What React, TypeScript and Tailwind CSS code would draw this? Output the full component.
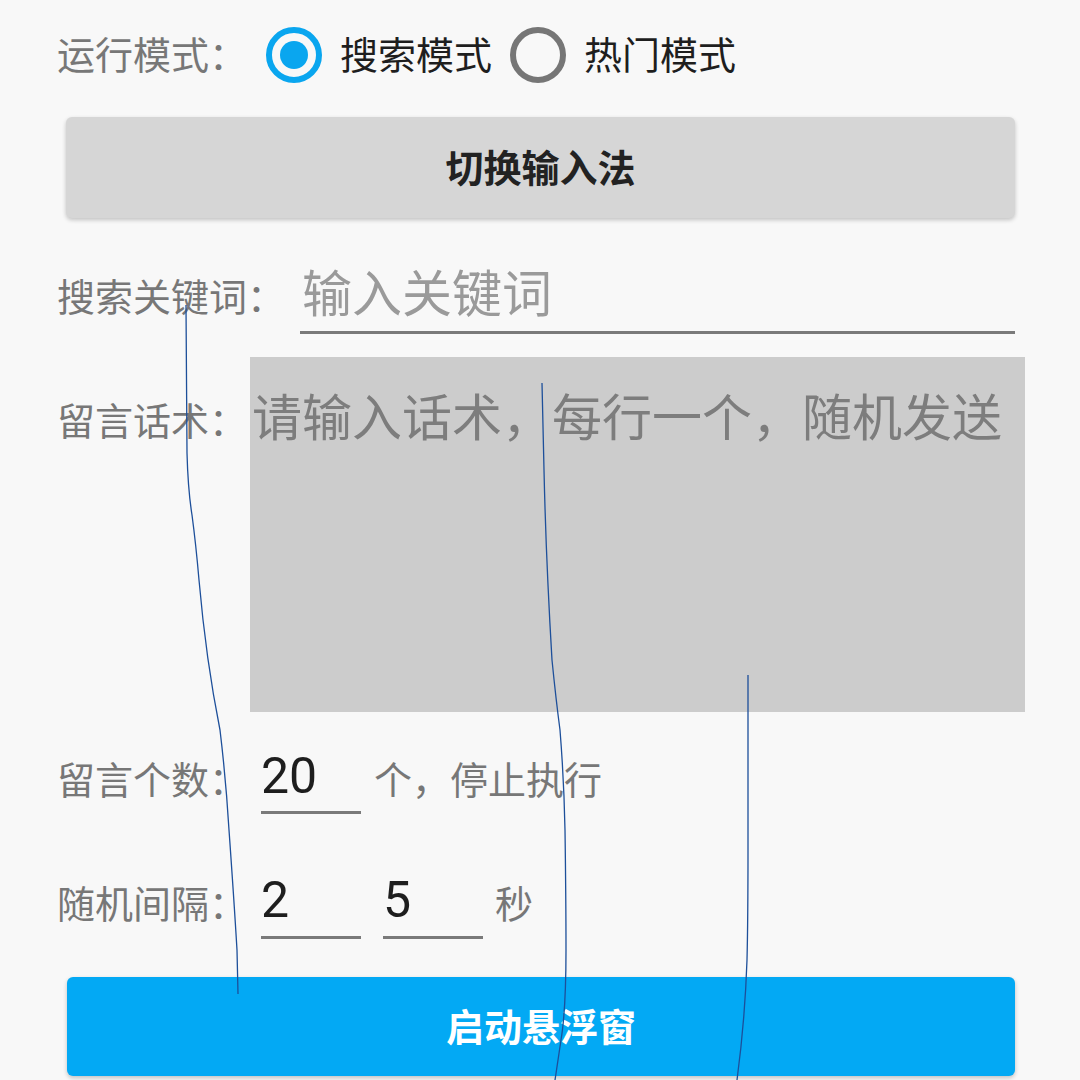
import React from "react";

const cjk = { fontFamily: '"Noto Sans CJK SC", "Noto Sans", sans-serif' };
const num = { fontFamily: 'Roboto, "Noto Sans CJK SC", sans-serif' };

const Radio = ({ checked }: { checked: boolean }) => (
    <div
        className={
            checked
                ? "w-[56px] h-[56px] rounded-full border-[6px] border-[#0aa6ef] flex items-center justify-center shrink-0"
                : "w-[56px] h-[56px] rounded-full border-[6px] border-[#767676] shrink-0"
        }
    >
        {checked && <div className="w-[28px] h-[28px] rounded-full bg-[#0aa6ef]" />}
    </div>
);

const LineInput = ({ value, className }: { value: string; className?: string }) => (
    <input
        readOnly
        value={value}
        style={num}
        className={`w-[100px] bg-transparent border-b-[3px] border-[#7a7a7a] text-[50px] text-[#1e1e1e] outline-none px-0 ${className ?? ""}`}
    />
);

// thin blue strokes drawn over the screenshot
const Scribbles = () => (
    <svg className="absolute inset-0 pointer-events-none" width="1080" height="1080" viewBox="0 0 1080 1080" fill="none">
        <path d="M186 305 L187 453 Q188 490 192 515 Q196 545 199 580 Q206 660 220 730 Q226 780 229 830 Q234 900 237 950 L238 994" stroke="#1d4f9a" strokeWidth="1.3" />
        <path d="M542 383 L544 470 Q546 560 552 660 Q556 700 560 730 Q564 780 565 830 Q566 900 566 950 Q566 1010 561 1040 L555 1080" stroke="#1d4f9a" strokeWidth="1.3" />
        <path d="M748 675 L748 850 Q748 920 747 960 Q745 1020 737 1080" stroke="#1d4f9a" strokeWidth="1.3" />
    </svg>
);

const App = () => {
    return (
        <div className="relative w-[1080px] h-[1080px] overflow-hidden bg-[#f8f8f8]" style={cjk}>
            <div className="pl-[57px] pr-[65px]">
                {/* 运行模式 */}
                <div className="mt-[20px] h-[70px] flex items-center">
                    <span className="w-[209px] text-[38px] text-[#777777] leading-none pb-[4px]">运行模式：</span>
                    <Radio checked />
                    <span className="ml-[18px] text-[38px] text-[#1e1e1e] leading-none pb-[4px]">搜索模式</span>
                    <div className="ml-[18px]"><Radio checked={false} /></div>
                    <span className="ml-[18px] text-[38px] text-[#1e1e1e] leading-none pb-[4px]">热门模式</span>
                </div>

                <button className="mt-[27px] ml-[9px] w-[949px] h-[101px] bg-[#d6d6d6] rounded-[6px] shadow-[0_2px_4px_rgba(0,0,0,0.22)] text-[38px] font-bold text-[#222222] flex items-center justify-center pb-[4px]">
                    切换输入法
                </button>

                {/* 搜索关键词 */}
                <div className="mt-[38px] flex items-center h-[78px]">
                    <span className="w-[243px] text-[38px] text-[#777777] leading-none shrink-0">搜索关键词：</span>
                    <input
                        readOnly
                        placeholder="输入关键词"
                        className="w-[715px] h-[78px] bg-transparent border-b-[3px] border-[#7a7a7a] text-[50px] outline-none px-[2px] pb-[8px] placeholder:text-[#9a9a9a]"
                    />
                </div>

                {/* 留言话术 */}
                <div className="mt-[23px] flex items-start">
                    <span className="w-[193px] shrink-0 pt-[39px] text-[38px] text-[#777777] leading-[1.2]">留言话术：</span>
                    <textarea
                        readOnly
                        placeholder="请输入话术，每行一个，随机发送"
                        className="w-[775px] h-[355px] shrink-0 bg-[#cccccc] resize-none outline-none pt-[27px] pl-[2px] text-[50px] leading-[1.2] placeholder:text-[#7d7d7d] overflow-hidden"
                    />
                </div>

                {/* 留言个数 */}
                <div className="mt-[29px] flex items-center h-[73px]">
                    <span className="w-[204px] shrink-0 text-[38px] text-[#777777] leading-none">留言个数：</span>
                    <LineInput value="20" className="h-[73px]" />
                    <span className="ml-[13px] text-[38px] text-[#777777] leading-none">个，停止执行</span>
                </div>

                {/* 随机间隔 */}
                <div className="mt-[51px] flex items-center h-[74px]">
                    <span className="w-[204px] shrink-0 text-[38px] text-[#777777] leading-none">随机间隔：</span>
                    <LineInput value="2" className="h-[74px]" />
                    <LineInput value="5" className="h-[74px] ml-[22px]" />
                    <span className="ml-[12px] text-[38px] text-[#777777] leading-none">秒</span>
                </div>

                <button className="mt-[38px] ml-[10px] w-[948px] h-[99px] bg-[#03a9f4] rounded-[6px] shadow-[0_2px_4px_rgba(0,0,0,0.22)] text-[38px] font-bold text-white flex items-center justify-center pb-[4px]">
                    启动悬浮窗
                </button>
            </div>
            <Scribbles />
        </div>
    );
};

export default App;
